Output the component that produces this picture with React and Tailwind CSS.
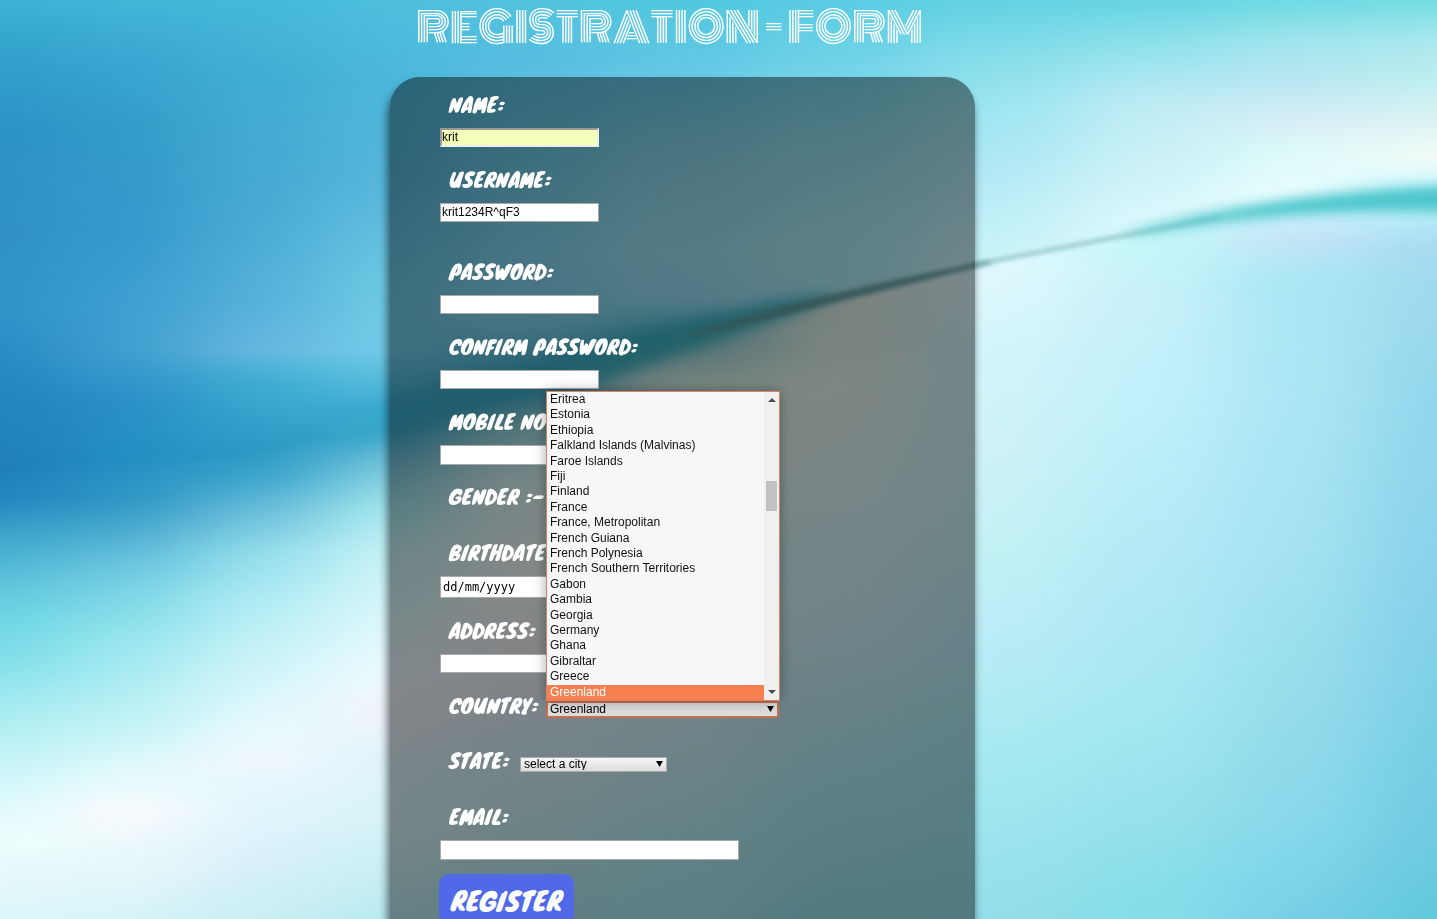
import React from "react";

const COUNTRIES = [
  "Eritrea",
  "Estonia",
  "Ethiopia",
  "Falkland Islands (Malvinas)",
  "Faroe Islands",
  "Fiji",
  "Finland",
  "France",
  "France, Metropolitan",
  "French Guiana",
  "French Polynesia",
  "French Southern Territories",
  "Gabon",
  "Gambia",
  "Georgia",
  "Germany",
  "Ghana",
  "Gibraltar",
  "Greece",
  "Greenland",
];

// Each column of the backdrop: centre x, then "y colour" pairs from top to bottom.
const SKY = [
  [0, "0 #3fb3d6,40 #32a5cd,130 #2b92c6,230 #3090c6,310 #2f92c7,400 #2484bf,469 #1f7db8"],
  [130, "0 #42b6d9,60 #39a6d2,130 #329cc8,230 #3599cc,310 #3f9fd2,350 #409fd0,400 #2a90c6,460 #2290c2"],
  [260, "0 #45b9da,80 #40add4,200 #48a9d4,300 #55b1da,350 #66b8df,380 #3fadd3,415 #33a5cd,455 #2b98c4"],
  [390, "0 #4cbfdc,80 #4bb6da,180 #56b5db,280 #6ccae2,350 #72cce8,375 #5cc0dd,410 #40acd8,430 #35a4cc"],
  [520, "0 #52c4de,60 #56bde0,150 #6bc8e1,250 #82d4ee,320 #86d3f0,360 #58bcd8,380 #3eaaca"],
  [680, "0 #50c8de,60 #60c6e4,150 #86d3e8,250 #9be2f4,300 #95dcf4,335 #4cc0cf"],
  [840, "0 #58cce4,60 #70d2e8,150 #94dff0,240 #a9eaf6,290 #a9eaf6"],
  [1000, "0 #62d2e2,60 #88deea,110 #9ee6f0,180 #b6eaf6,240 #c6f2f8,280 #d0f8fc"],
  [1150, "0 #66d4e2,50 #92e2ec,100 #bdebf4,170 #cdf2f8,220 #dcf8fc"],
  [1300, "0 #6cdae2,40 #a0e4ec,90 #c0e8f4,120 #d8eef6,150 #dcfaf8,190 #e8fdfd"],
  [1437, "0 #74dce4,40 #a8e8ee,90 #c4f0f0,130 #e4f4f4,160 #f4fcf8,190 #c0f4fc"],
];

const SAND = [
  [0, "460 #1f7db8,500 #2386be,530 #38a2c8,586 #60c4dc,620 #6cd6e2,660 #80deea,710 #a6ecf0,780 #d0f6fa,840 #eefefe,880 #e4f8f8,919 #daf6fa"],
  [130, "460 #2690c2,500 #2f98c6,530 #4aaace,560 #66c2de,590 #78d4e4,640 #98e6ee,720 #c0f2f6,770 #e2fafa,810 #fbfbfe,850 #eaf8fa,919 #d6f4f8"],
  [260, "450 #2b98c4,475 #38a4cc,510 #68bcd8,550 #90dcea,600 #b0ecf4,680 #d4f6fa,730 #e8fafd,760 #f2f6fe,800 #e0f6fc,860 #daf0fa,919 #c8eef4"],
  [390, "430 #3ca6cc,470 #7ac8dc,510 #a4e8ee,550 #c4f2f6,620 #dcf8fb,670 #ecfafe,710 #f2f4fa,760 #def4fa,820 #d8f4f8,919 #b8eaf0"],
  [520, "390 #4fb0c6,430 #9ad8dc,480 #dcf4f2,600 #f4f8f8,650 #f0f0f4,740 #d8f0f8,850 #c0ecf0,919 #b0e6ee"],
  [680, "345 #90d0d0,390 #e0f4ec,460 #e4f2f0,600 #dcf0f4,740 #c8eef6,850 #b2ecf2,919 #a6e8f2"],
  [840, "320 #dceee8,380 #e4f6ee,500 #dcf4f6,650 #c6eef6,800 #a9e8f1,919 #95dfec"],
  [1000, "280 #def8fc,350 #d2f5fc,450 #cdf2f8,560 #c0f0f4,620 #bcecf8,720 #acebf2,800 #a0e6ee,919 #92deea"],
  [1150, "235 #c4f8fa,300 #c8f0fa,400 #c0f0fa,550 #b4eaf6,700 #a6e8f0,800 #98e2ec,900 #86deea"],
  [1300, "220 #cceefc,240 #c4e4f6,280 #a8e8f4,400 #ace6f4,550 #a4e2f2,700 #96dcec,820 #88d8ea,919 #76d0e6"],
  [1437, "215 #b4ecf6,250 #a4daf0,400 #92d6ec,550 #88d2ea,700 #7ccfe6,850 #6ccae0,919 #60c8dc"],
];

function Strips({ id, columns }) {
  return columns.map(([x, stops], i) => {
    const left = i === 0 ? -300 : (columns[i - 1][0] + x) / 2;
    const right = i === columns.length - 1 ? 1740 : (columns[i + 1][0] + x) / 2;
    return (
      <g key={x}>
        <linearGradient id={`${id}${i}`} gradientUnits="userSpaceOnUse" x1="0" y1="0" x2="0" y2="919">
          {stops.split(",").map((s) => {
            const [y, color] = s.split(" ");
            return <stop key={y} offset={Number(y) / 919} stopColor={color} />;
          })}
        </linearGradient>
        <rect x={left} y={-100} width={right - left + 1} height={1120} fill={`url(#${id}${i})`} />
      </g>
    );
  });
}

function Backdrop() {
  return (
    <svg
      aria-hidden="true"
      className="fixed inset-0 -z-10 h-full w-full"
      viewBox="0 0 1437 919"
      preserveAspectRatio="none"
    >
      <defs>
        <filter id="melt" filterUnits="userSpaceOnUse" x="-300" y="-100" width="2040" height="1120" colorInterpolationFilters="sRGB">
          <feGaussianBlur stdDeviation="46 5" />
        </filter>
        <filter id="soft" filterUnits="userSpaceOnUse" x="-300" y="-100" width="2040" height="1300">
          <feGaussianBlur stdDeviation="4" />
        </filter>
        <filter id="haze" filterUnits="userSpaceOnUse" x="-300" y="-100" width="2040" height="1120" colorInterpolationFilters="sRGB">
          <feGaussianBlur stdDeviation="13 9" />
        </filter>
        <filter id="fine" filterUnits="userSpaceOnUse" x="-300" y="-100" width="2040" height="1120" colorInterpolationFilters="sRGB">
          <feGaussianBlur stdDeviation="3 2" />
        </filter>
        <filter id="edge" filterUnits="userSpaceOnUse" x="-300" y="-100" width="2040" height="1120" colorInterpolationFilters="sRGB">
          <feGaussianBlur stdDeviation="10 6" />
        </filter>
        <mask id="below" maskUnits="userSpaceOnUse" x="-300" y="-100" width="2040" height="1300">
          <path
            fill="#fff"
            filter="url(#soft)"
            d="M-300 471 L0 469 C150 465 280 452 390 425 S600 368 700 333 S900 284 979 265 S1200 218 1437 202 L1740 190 V1200 H-300 Z"
          />
        </mask>
      </defs>
      <g filter="url(#melt)">
        <Strips id="sky" columns={SKY} />
      </g>
      <g mask="url(#below)">
        <g filter="url(#melt)">
          <Strips id="sand" columns={SAND} />
        </g>
      </g>
      <path
        filter="url(#haze)"
        fill="#35a8c8"
        opacity="0.75"
        d="M330 412 C430 392 520 366 610 340 C680 322 740 312 800 298 L806 304 C730 332 640 366 560 392 C500 412 420 428 330 446 Z"
      />
      <path
        filter="url(#edge)"
        fill="#3fb4bf"
        opacity="0.85"
        d="M540 376 C640 336 720 314 830 292 L836 298 C750 328 680 350 560 392 Z"
      />
      <path
        filter="url(#fine)"
        fill="#5f9a9e"
        opacity="0.85"
        d="M690 333 C790 302 870 284 990 260 L990 264 C880 291 800 313 690 337 Z"
      />
      <path
        filter="url(#fine)"
        fill="none"
        stroke="#7fb4b6"
        strokeWidth="4"
        opacity="0.7"
        d="M970 266 C1000 259 1020 256 1060 248 S1140 232 1220 217"
      />
      <path
        filter="url(#edge)"
        fill="#4cc6cc"
        d="M1130 232 C1220 208 1320 190 1470 185 L1470 212 C1350 208 1240 217 1130 236 Z"
      />
    </svg>
  );
}

const MARKER = "font-['Knewave','Open_Sans',sans-serif] font-normal text-white";
const LABEL = `block h-7 pl-[9px] text-xl leading-7 whitespace-nowrap ${MARKER}`;
const PLAIN_BOX = "h-[19px] w-[159px] border border-[#a9a9a9] bg-white pl-px pb-0.5";

function Field({ id, label, gap = "mb-[19px]", box = PLAIN_BOX, ...rest }) {
  return (
    <div className={`flex flex-col gap-[9px] ${gap}`}>
      <label htmlFor={id} className={LABEL}>
        {label}
      </label>
      <input id={id} name={id} className={`block text-xs text-black outline-none ${box}`} {...rest} />
    </div>
  );
}

function Arrow({ className, d = "M0 0 H8 L4 7 Z", box = "0 0 8 7" }) {
  return (
    <svg aria-hidden="true" viewBox={box} className={className}>
      <path d={d} fill="currentColor" />
    </svg>
  );
}

function CountryList() {
  return (
    <div className="absolute bottom-full left-0 z-10 flex w-[234px] border border-[#d58467] bg-[#f7f7f7] shadow-[0_0_12px_rgba(0,0,0,0.35)]">
      <ul
        role="listbox"
        aria-label="Country"
        className="grid h-[308px] flex-1 grid-rows-[repeat(20,minmax(0,1fr))] text-xs leading-[14px] text-[#111]"
      >
        {COUNTRIES.map((name) => {
          const selected = name === "Greenland";
          return (
            <li
              key={name}
              role="option"
              aria-selected={selected}
              className={`pl-[3px] whitespace-nowrap ${selected ? "bg-[#f77f50] text-white" : ""}`}
            >
              {name}
            </li>
          );
        })}
      </ul>
      <div aria-hidden="true" className="flex w-[15px] flex-col items-center bg-[#f0f0f0] py-1.5 text-[#4a4a4a]">
        <Arrow className="h-1 w-2" d="M0 4 H8 L4 0 Z" box="0 0 8 4" />
        <div className="mt-[79px] h-[30px] w-[11px] bg-[#c1c1c1]" />
        <Arrow className="mt-auto h-1 w-2" d="M0 0 H8 L4 4 Z" box="0 0 8 4" />
      </div>
    </div>
  );
}

export default function App() {
  return (
    <div className="relative isolate min-h-screen font-['Liberation_Sans',Arial,sans-serif]">
      <Backdrop />
      <header className="flex h-[77px] justify-center pr-[98px]">
        <h1 className="font-['Monoton','Inter',sans-serif] text-[40px] leading-[56px] font-normal whitespace-nowrap text-white">
          REGISTRATION - FORM
        </h1>
      </header>
      <main className="flex justify-center pr-[72px]">
        <form
          onSubmit={(e) => e.preventDefault()}
          className="w-[585px] max-w-full rounded-t-[30px] bg-black/45 px-[50px] pt-3.5 pb-10 shadow-[-2px_8px_10px_rgba(0,0,0,0.6)]"
        >
          <Field
            id="name"
            label="NAME:"
            defaultValue="krit"
            box="h-[19px] w-[159px] border-2 border-t-[#9a9a9a] border-l-[#9a9a9a] border-r-[#eeeeee] border-b-[#eeeeee] bg-[#f4ffb8] pb-0.5"
          />
          <Field id="username" label="USERNAME:" defaultValue="krit1234R^qF3" gap="mb-9" />
          <Field id="password" label="PASSWORD:" type="password" />
          <Field id="confirm" label="CONFIRM PASSWORD:" type="password" />
          <Field
            id="mobile"
            label="MOBILE NO:"
            type="tel"
            gap="mb-[18px]"
            box="h-5 w-[159px] border border-[#a9a9a9] bg-white pl-px"
          />
          <p className={`${LABEL} mb-7`}>GENDER :-</p>
          <Field
            id="birthdate"
            label="BIRTHDATE:"
            placeholder="dd/mm/yyyy"
            box="h-[22px] w-[159px] border border-[#a9a9a9] bg-white pl-0.5 font-['DejaVu_Sans_Mono',monospace] placeholder:text-black placeholder:opacity-100"
          />
          <Field id="address" label="ADDRESS:" />
          <div className="mb-[27px] flex items-end">
            <label htmlFor="country" className={`${LABEL} w-[106px]`}>
              COUNTRY:
            </label>
            <div className="relative mb-0.5">
              <select
                id="country"
                defaultValue="Greenland"
                className="block h-[17px] w-[233px] appearance-none rounded-xs border-2 border-[#c96f50] bg-[#dddddd] pb-px pl-0.5 text-xs leading-3 text-black outline-none"
              >
                {COUNTRIES.map((name) => (
                  <option key={name}>{name}</option>
                ))}
              </select>
              <Arrow className="pointer-events-none absolute top-[5px] right-[5px] h-[6px] w-[7px] text-black" />
              <CountryList />
            </div>
          </div>
          <div className="mb-7 flex items-end">
            <label htmlFor="state" className={`${LABEL} w-20`}>
              STATE:
            </label>
            <div className="relative mb-[3px]">
              <select
                id="state"
                className="block h-[15px] w-[147px] appearance-none border border-[#a9a9a9] bg-linear-to-b from-[#f6f6f6] to-[#dddddd] pb-px pl-[3px] text-xs leading-3 text-black outline-none"
              >
                <option>select a city</option>
              </select>
              <Arrow className="pointer-events-none absolute top-1 right-1 h-[6px] w-[7px] text-black" />
            </div>
          </div>
          <Field
            id="email"
            label="EMAIL:"
            type="email"
            gap="mb-3.5"
            box="h-5 w-[299px] max-w-full border border-[#a9a9a9] bg-white pl-px"
          />
          <button
            type="submit"
            className={`-ml-px h-[52px] w-[135px] rounded-[10px] bg-[#5069e8] text-[26px] leading-[52px] ${MARKER}`}
          >
            REGISTER
          </button>
        </form>
      </main>
    </div>
  );
}
